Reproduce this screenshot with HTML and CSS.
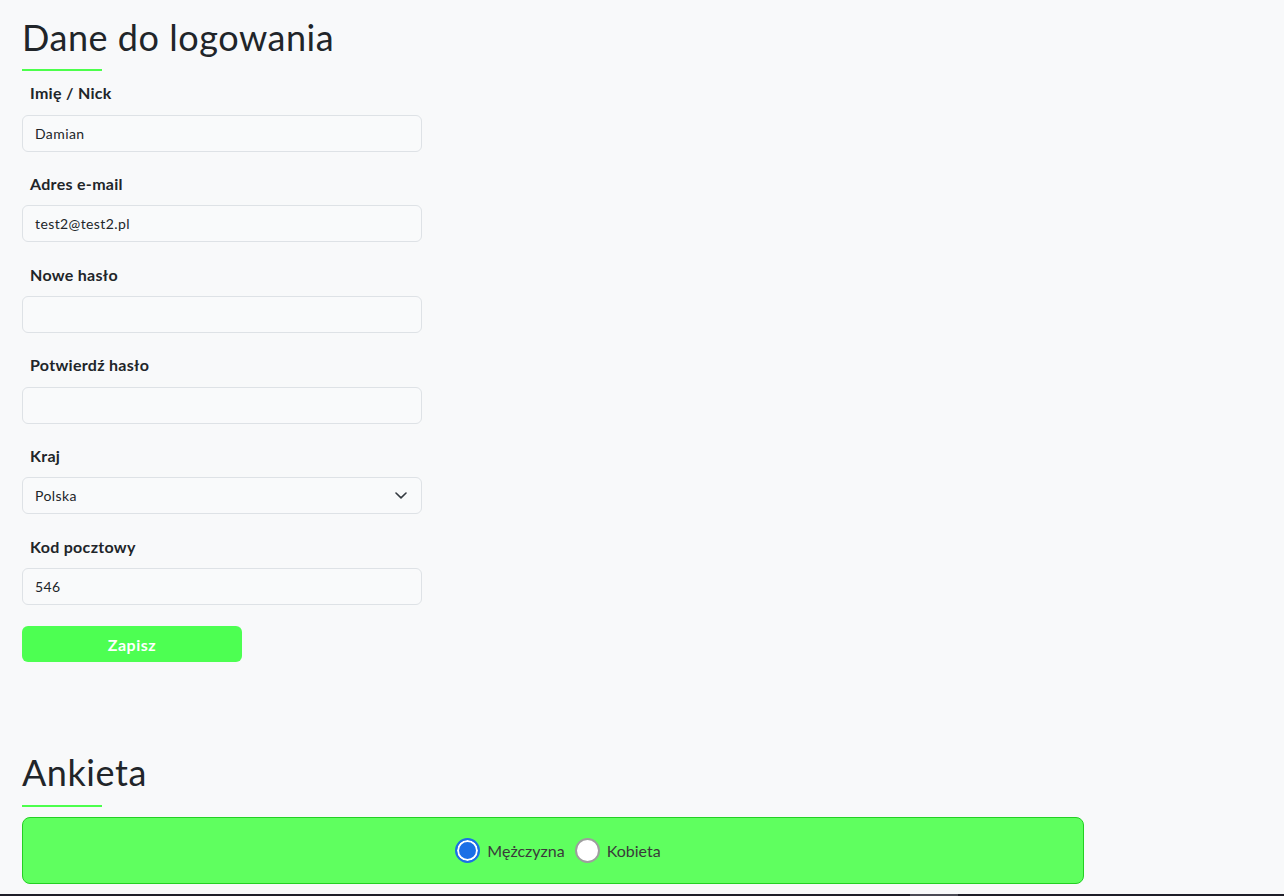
FILE: index.html
```html
<!DOCTYPE html>
<html lang="pl">
<head>
<meta charset="utf-8">
<title>Dane do logowania</title>
<link rel="stylesheet" href="styles.css">
</head>
<body>
<main class="page">
  <section class="section login">
    <h2 class="section-title">Dane do logowania</h2>
    <div class="title-bar"></div>
    <form class="form">
      <div class="group">
        <label class="label">Imię / Nick</label>
        <div class="input">Damian</div>
      </div>
      <div class="group">
        <label class="label">Adres e-mail</label>
        <div class="input">test2@test2.pl</div>
      </div>
      <div class="group">
        <label class="label">Nowe hasło</label>
        <div class="input"></div>
      </div>
      <div class="group">
        <label class="label">Potwierdź hasło</label>
        <div class="input"></div>
      </div>
      <div class="group">
        <label class="label">Kraj</label>
        <div class="input select">
          <span>Polska</span>
          <svg class="chevron" width="12" height="7" viewBox="0 0 12 7"><path d="M1 1l5 4.8L11 1" fill="none" stroke="#343a40" stroke-width="1.6" stroke-linecap="round" stroke-linejoin="round"/></svg>
        </div>
      </div>
      <div class="group">
        <label class="label">Kod pocztowy</label>
        <div class="input">546</div>
      </div>
      <button type="button" class="btn">Zapisz</button>
    </form>
  </section>
  <section class="section survey">
    <h2 class="section-title">Ankieta</h2>
    <div class="title-bar"></div>
    <div class="survey-box">
      <span class="radio checked"></span>
      <span class="radio-label">Mężczyzna</span>
      <span class="radio"></span>
      <span class="radio-label">Kobieta</span>
    </div>
  </section>
</main>
<footer class="footer"><span class="footer-mark"></span></footer>
</body>
</html>
```
FILE: styles.css
```css
html, body {
  margin: 0;
  padding: 0;
  background: #f8f9fa;
}
body {
  font-family: Lato, "Noto Sans", sans-serif;
  color: #212529;
  height: 896px;
  overflow: hidden;
  display: flex;
  flex-direction: column;
}
.page {
  padding: 0 22px;
  flex: 1;
}
.section-title {
  margin: 0;
  font-size: 36px;
  font-weight: 400;
  line-height: 1.2;
  letter-spacing: 0.55px;
  color: #212529;
}
.login .section-title {
  margin-top: 16px;
}
.survey .section-title {
  margin-top: 89px;
}
.title-bar {
  width: 80px;
  height: 2px;
  background: #4cff4c;
  margin-top: 10px;
}
.form {
  margin-top: 11px;
  width: 400px;
}
.group {
  display: flex;
  flex-direction: column;
  margin-bottom: 21.2px;
}
.label {
  font-size: 16px;
  font-weight: 700;
  line-height: 22.5px;
  letter-spacing: 0.3px;
  padding-left: 8px;
  margin-bottom: 10px;
}
.input {
  box-sizing: border-box;
  height: 37px;
  border: 1px solid #dee2e6;
  border-radius: 6px;
  background: #f9fafb;
  padding: 0 12px;
  font-size: 14px;
  letter-spacing: 0.4px;
  display: flex;
  align-items: center;
  color: #212529;
}
.select {
  justify-content: space-between;
  padding-right: 14px;
}
.btn {
  display: block;
  width: 220px;
  height: 36px;
  border: 0;
  border-radius: 6px;
  background: #4dff52;
  color: #fff;
  font-family: inherit;
  font-weight: 700;
  font-size: 16px;
  letter-spacing: 0.5px;
  cursor: pointer;
}
.survey-box {
  box-sizing: border-box;
  margin-top: 10px;
  width: 1062px;
  height: 67px;
  background: #5fff5f;
  border: 1px solid #23d023;
  border-radius: 8px;
  display: flex;
  align-items: center;
  justify-content: center;
  padding-left: 10px;
}
.radio {
  box-sizing: border-box;
  width: 25px;
  height: 25px;
  border-radius: 50%;
  background: #fff;
  border: 2px solid #9e9e9e;
}
.radio.checked {
  background: #1b6fe6;
  border-color: #1b6fe6;
  box-shadow: inset 0 0 0 2px #fff;
}
.radio-label {
  font-size: 16px;
  color: #3a3a3a;
  margin: 0 10px 0 7px;
}
.radio-label:last-child {
  margin-right: 0;
}
.footer {
  height: 2px;
  background: #1e1e28;
  position: relative;
  flex: none;
}
.footer-mark {
  position: absolute;
  left: 910px;
  top: 0;
  width: 48px;
  height: 2px;
  background: #4a4a55;
}
```
